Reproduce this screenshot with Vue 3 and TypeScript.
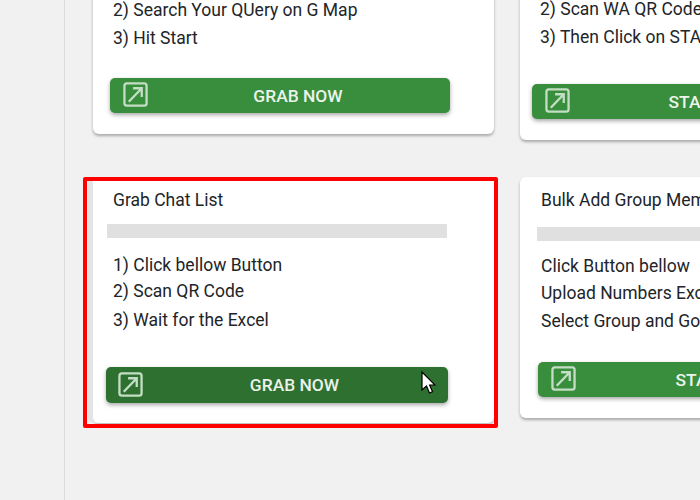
<script setup lang="ts">
interface Card {
  id: string
  title?: string
  lines: string[]
  action: string
  active?: boolean
}

const cards: Card[] = [
  {
    id: 'maps',
    lines: ['2) Search Your QUery on G Map', '3) Hit Start'],
    action: 'GRAB NOW',
  },
  {
    id: 'scan',
    lines: ['2) Scan WA QR Code', '3) Then Click on START'],
    action: 'START',
  },
  {
    id: 'chat',
    title: 'Grab Chat List',
    lines: ['1) Click bellow Button', '2) Scan QR Code', '3) Wait for the Excel'],
    action: 'GRAB NOW',
    active: true,
  },
  {
    id: 'group',
    title: 'Bulk Add Group Members',
    lines: ['Click Button bellow', 'Upload Numbers Excel', 'Select Group and Go'],
    action: 'START',
  },
]
</script>

<template>
  <div class="page">
    <aside class="sidebar"></aside>
    <main class="content">
      <div class="grid">
        <section
          v-for="card in cards"
          :key="card.id"
          class="card"
          :class="['card-' + card.id, { active: card.active }]"
        >
          <template v-if="card.title">
            <h3 class="title">{{ card.title }}</h3>
            <div class="bar"></div>
          </template>
          <p v-for="line in card.lines" :key="line" class="line">{{ line }}</p>
          <button class="action" type="button">
            <svg class="icon" viewBox="0 0 26 26" fill="none" stroke="currentColor" stroke-width="2.4">
              <rect x="1.5" y="1.5" width="23" height="23" rx="2.5" />
              <path d="M6 20.5 19.5 6.5M10.5 6.5H19.5V15.5" />
            </svg>
            <span class="label">{{ card.action }}</span>
          </button>
        </section>
      </div>
    </main>

    <div class="highlight"></div>
    <svg class="cursor" viewBox="0 0 15 24" width="15" height="24">
      <path d="M1 1V19L5.5 15L8.5 22L11.5 20.7L8.6 14H14Z" fill="#fff" stroke="#000" stroke-width="1.2" />
    </svg>
  </div>
</template>

<style>
html,
body {
  margin: 0;
  background: #f1f1f1;
}
</style>

<style scoped>
.page {
  position: relative;
  display: flex;
  width: 700px;
  height: 500px;
  overflow: hidden;
  background: #f1f1f1;
  font-family: Roboto, "Liberation Sans", sans-serif;
  color: #212529;
}

.sidebar {
  flex: none;
  width: 64px;
  border-right: 1px solid #dcdcdc;
}

.content {
  flex: none;
  width: 700px;
  padding-left: 28px;
}

.grid {
  display: grid;
  grid-template-columns: 401px 401px;
  column-gap: 26px;
  align-items: start;
  margin-top: -60px;
}

.card {
  box-sizing: border-box;
  background: #fff;
  border-radius: 6px;
  box-shadow: 0 2px 3px rgba(0, 0, 0, 0.3);
}

.card-maps {
  height: 194px;
  padding: 56px 44px 0 17px;
  margin-bottom: 43px;
}

.card-scan {
  height: 200px;
  padding: 55px 0 0 12px;
}

.card-scan .line {
  padding-left: 8px;
}

.card-scan .action {
  width: 290px;
  margin-top: 33px;
}

.card-chat {
  height: 246px;
  padding: 0 46px 0 13px;
  border-radius: 0 0 6px 6px;
  box-shadow: -5px 0 0 #e4e4e4, 0 2px 2px rgba(0, 0, 0, 0.2);
}

.card-chat .title,
.card-chat .line {
  padding-left: 7px;
}

.card-chat .bar {
  margin: 12px 0 13px 1px;
}

.card-chat .line:nth-of-type(2) {
  margin-top: -2px;
}

.card-chat .line:nth-of-type(3) {
  margin-top: 1px;
}

.card-chat .action {
  width: 342px;
  height: 36px;
  margin-top: 33px;
}

.card-chat .icon {
  margin-left: 12px;
}

.card-group {
  height: 241px;
  padding: 0 0 0 18px;
}

.card-group .bar {
  margin: 15px 0 11px -1px;
}

.card-group .line:nth-of-type(2) {
  margin-top: -1px;
}

.card-group .action {
  width: 292px;
  margin-top: 27px;
}

.title {
  margin: 0;
  padding: 11px 0 0 3px;
  font-size: 17.5px;
  font-weight: 400;
  line-height: 24px;
}

.bar {
  height: 14px;
  width: 340px;
  background: #e0e0e0;
}

.line {
  margin: 0;
  padding-left: 3px;
  font-size: 17.5px;
  line-height: 28px;
  white-space: nowrap;
}

.action {
  display: flex;
  align-items: center;
  width: 340px;
  height: 35px;
  margin-top: 26px;
  padding: 0;
  border: none;
  border-radius: 5px;
  background: #388e3c;
  color: #fff;
  font: 500 17.4px Roboto, sans-serif;
  box-shadow: 0 2px 4px rgba(0, 0, 0, 0.35);
}

.active .action {
  background: #2e702f;
}

.icon {
  flex: none;
  width: 25px;
  height: 25px;
  margin-left: 13px;
  margin-top: -2px;
  color: #c3dec4;
}

.label {
  flex: 1;
  margin-left: -2px;
  text-align: center;
  opacity: 0.9;
}

.highlight {
  position: absolute;
  left: 83px;
  top: 177px;
  width: 407px;
  height: 243px;
  border: 4px solid #fe0000;
  border-radius: 2px;
}

.cursor {
  position: absolute;
  left: 421px;
  top: 371px;
}
</style>
